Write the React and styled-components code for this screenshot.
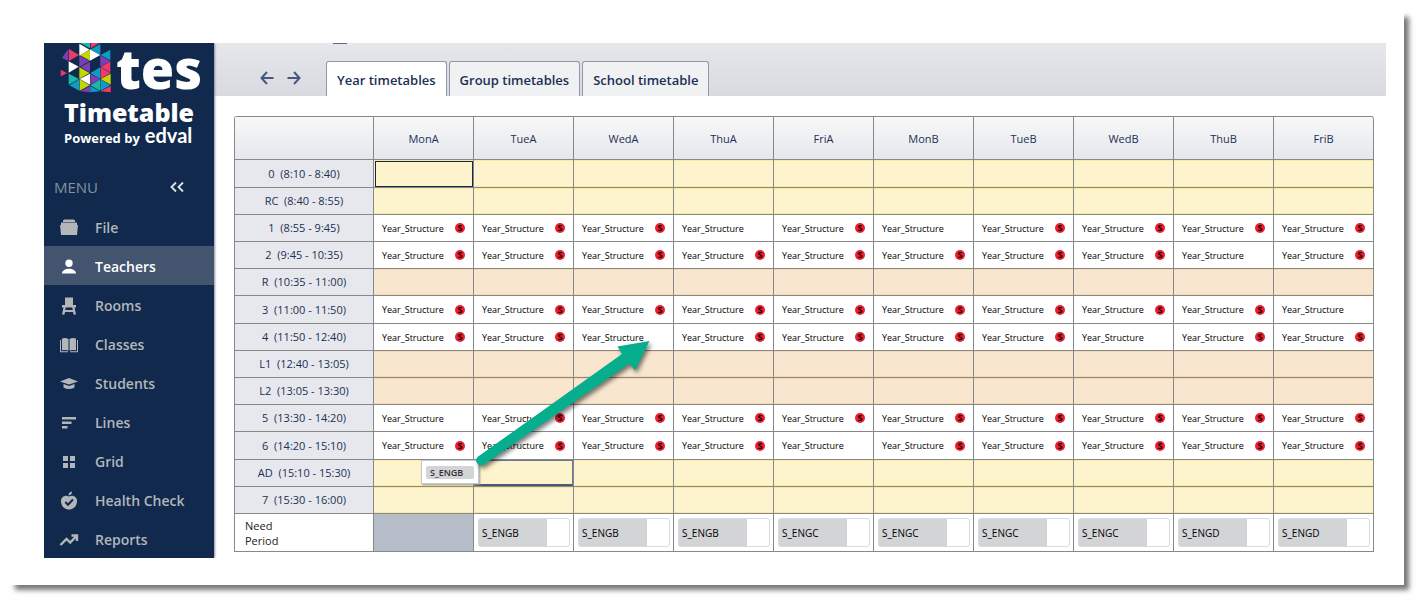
import {useState} from "react";
import styled, {createGlobalStyle} from "styled-components";

const colors = {
    navy: '#10294d',
    navyActive: '#43546f',
    text: '#1b3054',
    muted: '#b3b6b9',
    line: '#87888a',
    head: '#e6e8ed',
    yellow: '#fdf4cd',
    yellowEdge: '#fbe9a0',
    orange: '#f9e6cf',
    orangeEdge: '#f8d8b0',
    grey: '#d3d4d6',
    slate: '#b5bdc8',
    red: '#ee1c2e',
    green: '#06ae8e',
    white: '#ffffff',
}

const GlobalStyle = createGlobalStyle`
  * {
    box-sizing: border-box;
  }
  body {
    margin: 0;
    background-color: ${colors.white};
    font-family: "Open Sans", "Noto Sans", sans-serif;
    color: ${colors.text};
  }
`
const Sheet = styled.div`
  margin: 12px 19px 18px 10px;
  padding: 31px 18px 27px 34px;
  background-color: ${colors.white};
  box-shadow: 5px 5px 5px #777777;
`
const Layout = styled.div`
  display: flex;
  overflow: hidden;
`
const Sidebar = styled.aside`
  flex: 0 0 170px;
  min-width: 0;
  position: relative;
  background-color: ${colors.navy};
  box-shadow: 1px 0 2px #8a8f98;
`
const Brand = styled.div`
  display: flex;
  flex-direction: column;
  padding: 0 14px;
  height: 124px;
  color: ${colors.white};
`
const BrandTop = styled.div`
  display: flex;
  height: 54px;
`
const BrandLogo = styled.svg`
  flex: none;
`
const BrandName = styled.span`
  margin-left: 2px;
  font-size: 54px;
  font-weight: 800;
  line-height: 50px;
`
const BrandProduct = styled.span`
  padding-left: 6px;
  font-size: 25px;
  font-weight: 800;
  line-height: 30px;
`
const BrandPowered = styled.span`
  display: flex;
  align-items: baseline;
  gap: 5px;
  padding-left: 6px;
  font-size: 13px;
  font-weight: 700;
  line-height: 16px;
  white-space: nowrap;
`
const Edval = styled.span`
  font-family: Lato, sans-serif;
  font-size: 20px;
`
const MenuHead = styled.div`
  display: flex;
  align-items: center;
  justify-content: space-between;
  height: 40px;
  padding: 0 29px 0 10px;
  font-size: 15px;
  color: #8491a5;
`
const IconBtn = styled.button`
  display: flex;
  padding: 0;
  border: 0;
  background: none;
  color: inherit;
  cursor: pointer;
`
const MenuLink = styled.a`
  display: flex;
  align-items: center;
  gap: 16px;
  height: 39px;
  padding: 2px 0 0 15px;
  font-size: 14px;
  font-weight: 600;
  text-decoration: none;
  color: ${({$active}) => $active ? colors.white : colors.muted};
  background-color: ${({$active}) => $active ? colors.navyActive : 'transparent'};
`
const Main = styled.main`
  flex: 1;
  min-width: 0;
`
const TopBar = styled.header`
  display: flex;
  align-items: flex-end;
  height: 53px;
  padding-left: 46px;
  background: linear-gradient(#e5e7eb, #d9dae0);
`
const History = styled.div`
  display: flex;
  gap: 13px;
  margin-right: 25px;
  padding-bottom: 11px;
  color: #44587a;
`
const Tabs = styled.div`
  position: relative;
  display: flex;
  gap: 2px;
`
const Underline = styled.span`
  position: absolute;
  top: -18px;
  left: 7px;
  width: 14px;
  height: 1px;
  background-color: #5d6b80;
`
const Tab = styled.button`
  height: 35px;
  padding: 2px 10px 0;
  border: 1px solid #8c98ad;
  border-bottom: 0;
  border-radius: 3px 3px 0 0;
  background-color: ${({$active}) => $active ? colors.white : '#f0f1f2'};
  font-family: inherit;
  font-size: 13px;
  font-weight: 600;
  color: ${colors.text};
  cursor: pointer;
`
const TableArea = styled.div`
  padding: 20px 12px 6px 20px;
`
const Table = styled.table`
  width: 100%;
  table-layout: fixed;
  border-collapse: separate;
  border-spacing: 0;
  border-top: 1px solid ${colors.line};
  border-left: 1px solid ${colors.line};
  border-radius: 3px 3px 0 0;
`
const HeadCell = styled.th`
  width: ${({$label}) => $label ? '139px' : 'auto'};
  height: 43px;
  padding: 0;
  border-right: 1px solid ${colors.line};
  border-bottom: 1px solid ${colors.line};
  background: linear-gradient(#f8f8f9, #e5e7ec);
  font-size: 11px;
  font-weight: 500;
  &:last-child {
    border-top-right-radius: 3px;
  }
`
const PeriodCell = styled.th`
  height: ${({$tall}) => $tall ? '28px' : '27px'};
  padding: 0;
  border-right: 1px solid ${colors.line};
  border-bottom: 1px solid ${colors.line};
  background-color: ${colors.head};
  font-size: 11px;
  font-weight: 500;
  line-height: 16px;
  white-space: pre;
`
const fills = {
    yellow: [colors.yellow, colors.yellowEdge],
    orange: [colors.orange, colors.orangeEdge],
    lesson: [colors.white, colors.white],
}
const Cell = styled.td`
  position: relative;
  padding: 0 8px;
  border-right: 1px solid ${colors.line};
  border-bottom: 1px solid ${colors.line};
  background-color: ${({$kind}) => fills[$kind][0]};
  background-clip: padding-box;
  box-shadow: inset 0 1px ${({$kind}) => fills[$kind][1]}, inset 0 -1px ${({$kind}) => fills[$kind][1]};
`
const FocusRing = styled.span`
  position: absolute;
  inset: 1px 0 0 1px;
  border: 1px solid ${colors.navy};
`
const DropRing = styled.span`
  position: absolute;
  inset: 0;
  border: 1px solid #6a7890;
  border-bottom: 2px solid #475b78;
`
const Lesson = styled.div`
  display: flex;
  align-items: center;
  justify-content: space-between;
  height: 16px;
  font-size: 9px;
  color: #000000;
`
const Badge = styled.span`
  width: 10px;
  height: 10px;
  border-radius: 50%;
  background-color: ${colors.red};
  font-size: 9px;
  font-weight: 700;
  line-height: 10px;
  text-align: center;
`
const NeedHead = styled.th`
  height: 38px;
  padding: 0 0 0 10px;
  border-right: 1px solid ${colors.line};
  border-bottom: 1px solid ${colors.line};
  font-size: 11px;
  font-weight: 400;
  line-height: 15px;
  text-align: left;
  color: #222222;
`
const NeedCell = styled.td`
  padding: 0 3px 0 4px;
  border-right: 1px solid ${colors.line};
  border-bottom: 1px solid ${colors.line};
  background-color: ${({$empty}) => $empty ? colors.slate : colors.white};
`
const Need = styled.div`
  height: 29px;
  padding-right: 22px;
  border: 1px solid #d9dbe2;
  border-radius: 3px;
`
const NeedLabel = styled.div`
  height: 27px;
  padding-left: 3px;
  background-color: ${colors.grey};
  font-size: 10px;
  line-height: 28px;
  color: #000000;
`
const DragTag = styled.div`
  position: absolute;
  z-index: 2;
  top: 0;
  left: 47px;
  width: 58px;
  padding: 5px 4px 4px;
  border: 1px solid #c9c9cc;
  background-color: ${colors.white};
  box-shadow: 1px 1px 2px #9a9a9a;
`
const DragLabel = styled.div`
  padding-left: 4px;
  border-radius: 2px;
  background-color: ${colors.grey};
  font-size: 9px;
  font-weight: 600;
  line-height: 13px;
  color: #333333;
`
const Arrow = styled.svg`
  position: absolute;
  z-index: 3;
  top: -125px;
  left: 96px;
  filter: drop-shadow(2px 3px 2px rgba(0, 0, 0, 0.5));
  pointer-events: none;
`

const mosaic = [
    ['#1eb6a8', '66,0 96,0 96,16'],
    ['#ffffff', '64,2 64,38 95,20'],
    ['#f0386b', '98,0 125,0 98,16'],
    ['#ffffff', '96,19 96,53 127,36'],
    ['#c4d600', '96,20 96,53 66,37'],
    ['#0f9cc4', '127,3 127,37 98,19'],
    ['#0f9cc4', '128,36 157,20 157,52'],
    ['#7a3fb5', '31,18 31,54 12,44'],
    ['#f0386b', '33,18 33,54 63,36'],
    ['#7a3fb5', '64,38 64,71 95,54'],
    ['#7a3fb5', '127,37 127,71 157,54'],
    ['#ffffff', '32,55 32,89 62,71'],
    ['#f0386b', '8,80 8,100 27,91'],
    ['#f0386b', '157,55 157,88 128,72'],
    ['#c4d600', '64,73 64,107 95,90'],
    ['#7a3fb5', '96,56 96,88 67,72'],
    ['#0f9cc4', '127,73 127,107 97,90'],
    ['#f0386b', '128,73 128,107 158,90'],
    ['#1eb6a8', '32,92 32,125 63,108'],
    ['#ffffff', '96,92 96,125 65,108'],
    ['#7a3fb5', '97,92 97,125 127,108'],
    ['#c4d600', '158,92 158,125 128,108'],
    ['#0f9cc4', '64,109 64,143 34,127'],
    ['#c4d600', '65,109 65,143 95,127'],
    ['#1eb6a8', '127,109 127,143 97,127'],
    ['#0f9cc4', '128,109 128,143 157,127'],
    ['#7a3fb5', '96,129 96,148 66,145'],
    ['#0f9cc4', '97,129 97,148 126,145'],
    ['#f0386b', '158,129 158,148 128,145'],
]

const icons = {
    File: <path d="M4 2.500Q4.500 1.500 6 1.500H14Q15.500 1.500 16 2.500V4H4ZM2 4.500H18V7H19L18 17H2L1 7H2Z"/>,
    Teachers: <path d="M10 2.500a3.700 3.700 0 1 1 0 7.400a3.700 3.700 0 0 1 0-7.400ZM3 16.500c0-6.500 14-6.500 14 0Z"/>,
    Rooms: <path d="M6 1.500H14V9H17V11.500H15.500L17 18.500H14.500L14 16H6L5.500 18.500H3L4.500 11.500H3V9H6ZM6.700 11.500L6.300 14H13.700L13.300 11.500Z" fillRule="evenodd"/>,
    Classes: <path d="M3 3.500Q7 2.500 9.500 4V15.500Q7 14.500 3 15.200ZM10.500 4Q13 2.500 17 3.500V15.200Q13 14.500 10.500 15.500ZM1 5H2V16.200H9V17.300H1ZM19 5H18V16.200H11V17.300H19Z"/>,
    Students: <path d="M10 4L19 7.500L10 10.500L1 7.500ZM4.500 10L10 12L15.500 10V13.500Q10 16.500 4.500 13.500Z"/>,
    Lines: <path d="M3 4H17V6.500H3ZM3 8.500H12.500V11H3ZM3 13H8.500V15.500H3Z"/>,
    Grid: <path d="M4 4H9V9H4ZM11 4H16V9H11ZM4 11H9V16H4ZM11 11H16V16H11Z"/>,
    'Health Check': (
        <>
            <path d="M10 5.500C14 3.500 18 6 18 10C18 14.500 15 18.500 10 18.500C5 18.500 2 14.500 2 10C2 6 6 3.500 10 5.500ZM9.500 4.500Q9.500 1 13 0.500Q13 4 9.500 4.500Z"/>
            <path d="M6.300 11L9 13.700L14 8.500" fill="none" stroke={colors.navy} strokeWidth="2"/>
        </>
    ),
    Reports: <path d="M1.500 15L7.500 9L11.200 12.500L17 6.500M12.500 5.500H18V11" fill="none" stroke="currentColor" strokeWidth="2.400"/>,
}

const days = ['MonA', 'TueA', 'WedA', 'ThuA', 'FriA', 'MonB', 'TueB', 'WedB', 'ThuB', 'FriB']

const periods = [
    {name: '0  (8:10 - 8:40)', kind: 'yellow', tall: true, focus: 'MonA'},
    {name: 'RC  (8:40 - 8:55)', kind: 'yellow'},
    {name: '1  (8:55 - 9:45)', kind: 'lesson', free: ['ThuA', 'MonB']},
    {name: '2  (9:45 - 10:35)', kind: 'lesson', free: ['ThuB']},
    {name: 'R  (10:35 - 11:00)', kind: 'orange'},
    {name: '3  (11:00 - 11:50)', kind: 'lesson', tall: true, free: ['FriB']},
    {name: '4  (11:50 - 12:40)', kind: 'lesson', free: ['WedA', 'WedB']},
    {name: 'L1  (12:40 - 13:05)', kind: 'orange'},
    {name: 'L2  (13:05 - 13:30)', kind: 'orange'},
    {name: '5  (13:30 - 14:20)', kind: 'lesson', free: ['MonA']},
    {name: '6  (14:20 - 15:10)', kind: 'lesson', tall: true, free: ['FriA']},
    {name: 'AD  (15:10 - 15:30)', kind: 'yellow', drag: 'MonA', drop: 'TueA'},
    {name: '7  (15:30 - 16:00)', kind: 'yellow'},
]

const needs = ['', 'S_ENGB', 'S_ENGB', 'S_ENGB', 'S_ENGC', 'S_ENGC', 'S_ENGC', 'S_ENGC', 'S_ENGD', 'S_ENGD']

const tabs = ['Year timetables', 'Group timetables', 'School timetable']

const Logo = () => (
    <BrandLogo width="56" height="52" viewBox="0 0 168 156" aria-hidden="true">
        {mosaic.map(([fill, points]) => <polygon key={points} fill={fill} points={points}/>)}
    </BrandLogo>
)

const DragHint = () => (
    <>
        <DragTag>
            <DragLabel>S_ENGB</DragLabel>
        </DragTag>
        <Arrow width="190" height="140" viewBox="0 0 190 140" aria-hidden="true">
            <path
                fill={colors.green}
                d="M7.500 122L152 19L147.500 11.500L179.500 6L165 35.500L159.500 28.500L14 129.500A5 5 0 0 1 7.500 122Z"
            />
        </Arrow>
    </>
)

const App = () => {

    const [page, setPage] = useState('Teachers')
    const [tab, setTab] = useState(tabs[0])

    return (
        <Sheet>
            <GlobalStyle/>
            <Layout>
                <Sidebar>
                    <Brand>
                        <BrandTop>
                            <Logo/>
                            <BrandName>tes</BrandName>
                        </BrandTop>
                        <BrandProduct>Timetable</BrandProduct>
                        <BrandPowered>Powered by <Edval>edval</Edval></BrandPowered>
                    </Brand>
                    <MenuHead>
                        MENU
                        <IconBtn aria-label="Collapse menu">
                            <svg width="16" height="12" viewBox="0 0 16 12" fill="none" stroke="#dfe3e9" strokeWidth="1.800">
                                <path d="M7 1.500L2.500 6L7 10.500M14 1.500L9.500 6L14 10.500"/>
                            </svg>
                        </IconBtn>
                    </MenuHead>
                    <nav>
                        {Object.keys(icons).map(name => (
                            <MenuLink key={name} href="#" $active={name === page} onClick={() => setPage(name)}>
                                <svg width="20" height="20" viewBox="0 0 20 20" fill="currentColor">{icons[name]}</svg>
                                {name}
                            </MenuLink>
                        ))}
                    </nav>
                </Sidebar>
                <Main>
                    <TopBar>
                        <History>
                            <IconBtn aria-label="Back">
                                <svg width="14" height="14" viewBox="0 0 14 14" fill="none" stroke="currentColor" strokeWidth="2">
                                    <path d="M13.500 7H1.500M7 1L1.500 7L7 13"/>
                                </svg>
                            </IconBtn>
                            <IconBtn aria-label="Forward">
                                <svg width="14" height="14" viewBox="0 0 14 14" fill="none" stroke="currentColor" strokeWidth="2">
                                    <path d="M0.500 7H12.500M7 1L12.500 7L7 13"/>
                                </svg>
                            </IconBtn>
                        </History>
                        <Tabs>
                            <Underline/>
                            {tabs.map(name => (
                                <Tab key={name} $active={name === tab} onClick={() => setTab(name)}>{name}</Tab>
                            ))}
                        </Tabs>
                    </TopBar>
                    <TableArea>
                        <Table>
                            <thead>
                                <tr>
                                    <HeadCell $label/>
                                    {days.map(day => <HeadCell key={day} scope="col">{day}</HeadCell>)}
                                </tr>
                            </thead>
                            <tbody>
                                {periods.map(({name, kind, tall, focus, free, drag, drop}) => (
                                    <tr key={name}>
                                        <PeriodCell scope="row" $tall={tall}>{name}</PeriodCell>
                                        {days.map(day => (
                                            <Cell key={day} $kind={kind}>
                                                {kind === 'lesson' && (
                                                    <Lesson>
                                                        Year_Structure
                                                        {!free.includes(day) && <Badge>S</Badge>}
                                                    </Lesson>
                                                )}
                                                {focus === day && <FocusRing/>}
                                                {drop === day && <DropRing/>}
                                                {drag === day && <DragHint/>}
                                            </Cell>
                                        ))}
                                    </tr>
                                ))}
                                <tr>
                                    <NeedHead scope="row">Need<br/>Period</NeedHead>
                                    {needs.map((need, i) => (
                                        <NeedCell key={days[i]} $empty={!need}>
                                            {need && <Need><NeedLabel>{need}</NeedLabel></Need>}
                                        </NeedCell>
                                    ))}
                                </tr>
                            </tbody>
                        </Table>
                    </TableArea>
                </Main>
            </Layout>
        </Sheet>
    )
}

export default App
